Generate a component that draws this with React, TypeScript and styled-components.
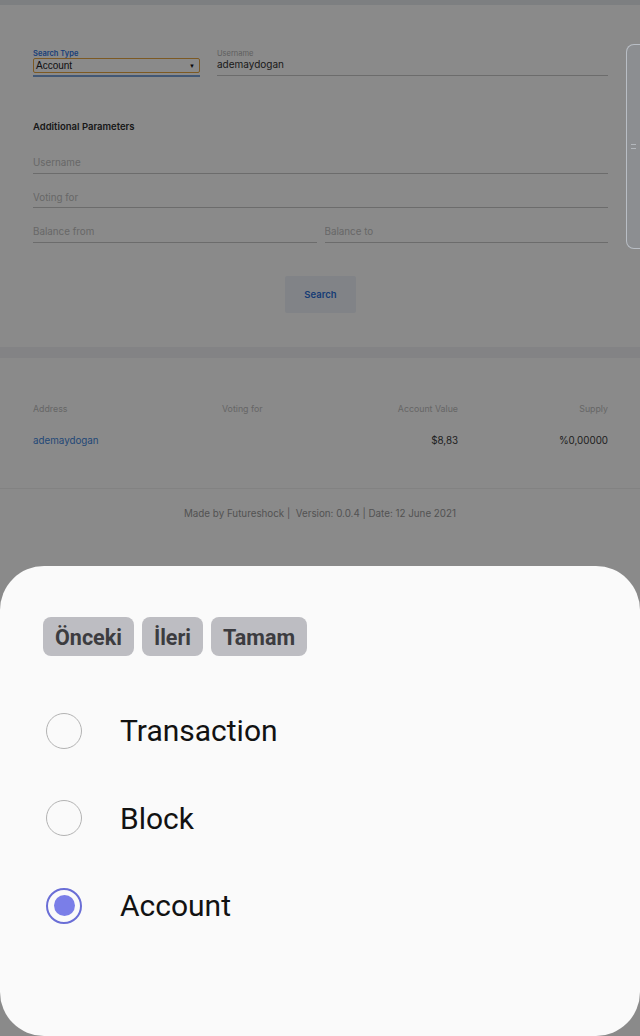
import React from 'react'
import styled, { createGlobalStyle } from 'styled-components'

const GlobalStyle = createGlobalStyle`
  html, body {
    margin: 0;
    padding: 0;
    background: #ffffff;
    font-family: Inter, "Noto Sans", "Liberation Sans", sans-serif;
  }
  * { box-sizing: border-box; }
`;

const Page = styled.div`
  width: 640px;
  min-height: 1036px;
  background: #ffffff;
`;

const TopBar = styled.div`
  height: 5px;
  background: #e8eaee;
`;

const SearchCard = styled.section`
  padding: 44px 32px 34px 33px;
  display: flex;
  flex-direction: column;
`;

const TopRow = styled.div`
  display: grid;
  grid-template-columns: 167px 1fr;
  gap: 17px;
`;

const FieldLabel = styled.div<{ $active?: boolean }>`
  font-size: 7.5px;
  line-height: 9px;
  height: 9px;
  color: ${p => (p.$active ? '#2f74e0' : '#b0b0b0')};
  font-weight: ${p => (p.$active ? 600 : 400)};
`;

const SelectBox = styled.div`
  height: 15px;
  border: 1px solid #e6a441;
  border-radius: 2px;
  display: flex;
  align-items: center;
  justify-content: space-between;
  padding: 0 4px 0 2px;
  font-family: "Liberation Sans", Arial, sans-serif;
  font-size: 10px;
  color: #222;
`;

const Caret = styled.span`
  font-size: 6px;
  color: #111;
`;

const ActiveLine = styled.div`
  margin-top: 2px;
  height: 1.5px;
  background: #7aa2d6;
`;

const ValueText = styled.div`
  font-size: 10px;
  line-height: 12px;
  color: #333;
  padding-bottom: 5px;
  border-bottom: 1px solid #c8c8c8;
`;

const Heading = styled.h3`
  margin: 43px 0 0;
  font-size: 9.5px;
  line-height: 14px;
  font-weight: 600;
  color: #2e2e2e;
`;

const Fields = styled.div`
  margin-top: 21px;
  display: flex;
  flex-direction: column;
  gap: 15.5px;
`;

const FieldRow = styled.div`
  display: grid;
  grid-template-columns: 1fr 1fr;
  gap: 8px;
`;

const LineInput = styled.input`
  display: block;
  width: 100%;
  height: 19px;
  padding: 0 0 2px;
  border: none;
  border-bottom: 1px solid #c8c8c8;
  background: transparent;
  font-family: inherit;
  font-size: 9.8px;
  line-height: 14px;
  color: #333;
  outline: none;
  &::placeholder { color: #c0c0c0; }
`;

const SearchButton = styled.button`
  align-self: center;
  margin-top: 33px;
  width: 71px;
  height: 37px;
  border: none;
  border-radius: 2px;
  background: #eef3fa;
  color: #2c6fd8;
  font-family: inherit;
  font-size: 9.5px;
  font-weight: 600;
`;

const Band = styled.div`
  height: 11px;
  background: #f2f3f5;
`;

const ResultsCard = styled.section`
  padding: 45px 32px 41px 33px;
  border-bottom: 1px solid #f0f0f0;
  display: flex;
  flex-direction: column;
  gap: 20px;
`;

const TableRow = styled.div`
  display: grid;
  grid-template-columns: 189px 118px 118px 1fr;
  line-height: 12px;
`;

const Cell = styled.div<{ $right?: boolean; $head?: boolean; $link?: boolean }>`
  text-align: ${p => (p.$right ? 'right' : 'left')};
  color: ${p => (p.$head ? '#bdbdbd' : p.$link ? '#3f86dc' : '#3a3a3a')};
  font-size: ${p => (p.$head ? '8.8px' : '9.8px')};
`;

const Footer = styled.footer`
  padding-top: 19px;
  text-align: center;
  font-size: 9.8px;
  line-height: 12px;
  color: #999999;
`;

const Scrim = styled.div`
  position: fixed;
  inset: 0;
  background: rgba(0, 0, 0, 0.46);
  z-index: 1;
`;

const EdgeHandle = styled.div`
  position: fixed;
  top: 44px;
  left: 626px;
  width: 30px;
  height: 205px;
  border: 1.5px solid rgba(215, 222, 232, 0.6);
  border-radius: 8px;
  background: rgba(150, 165, 185, 0.14);
  z-index: 3;
  display: flex;
  align-items: center;
  padding-left: 4px;
`;

const Grip = styled.div`
  width: 5px;
  height: 5px;
  border-top: 1px solid rgba(220, 225, 232, 0.5);
  border-bottom: 1px solid rgba(220, 225, 232, 0.5);
`;

const Sheet = styled.div`
  position: fixed;
  left: 0;
  right: 0;
  top: 566px;
  bottom: 0;
  background: #fafafa;
  border-radius: 44px;
  z-index: 2;
  padding: 51px 43px 0;
  font-family: Roboto, "Noto Sans", sans-serif;
`;

const Toolbar = styled.div`
  display: flex;
  gap: 8px;
`;

const ToolButton = styled.button`
  height: 39px;
  padding: 1px 12px 0;
  border: none;
  border-radius: 8px;
  background: #bdbdc2;
  color: #3c3c40;
  font-family: Roboto, sans-serif;
  font-size: 21.5px;
  font-weight: 700;
`;

const OptionList = styled.div`
  margin-top: 31px;
  padding-left: 3px;
  display: flex;
  flex-direction: column;
`;

const Option = styled.label`
  height: 87.5px;
  display: flex;
  align-items: center;
  gap: 38px;
  font-size: 30px;
  color: #121212;
`;

const RadioCircle = styled.span<{ $checked?: boolean }>`
  width: 36px;
  height: 36px;
  border-radius: 50%;
  border: ${p => (p.$checked ? '2px solid #6a6ed6' : '1.5px solid #b3b3b3')};
  display: flex;
  align-items: center;
  justify-content: center;
  &::after {
    content: '';
    display: ${p => (p.$checked ? 'block' : 'none')};
    width: 21px;
    height: 21px;
    border-radius: 50%;
    background: #7a7ee8;
  }
`;

const options = ['Transaction', 'Block', 'Account'];

const App = () => {
  const selected = 'Account';
  return (
    <>
      <GlobalStyle />
      <Page>
        <TopBar />
        <SearchCard>
          <TopRow>
            <div>
              <FieldLabel $active>Search Type</FieldLabel>
              <SelectBox>
                <span>Account</span>
                <Caret>▼</Caret>
              </SelectBox>
              <ActiveLine />
            </div>
            <div>
              <FieldLabel>Username</FieldLabel>
              <ValueText>ademaydogan</ValueText>
            </div>
          </TopRow>
          <Heading>Additional Parameters</Heading>
          <Fields>
            <LineInput placeholder="Username" />
            <LineInput placeholder="Voting for" />
            <FieldRow>
              <LineInput placeholder="Balance from" />
              <LineInput placeholder="Balance to" />
            </FieldRow>
          </Fields>
          <SearchButton type="button">Search</SearchButton>
        </SearchCard>
        <Band />
        <ResultsCard>
          <TableRow>
            <Cell $head>Address</Cell>
            <Cell $head>Voting for</Cell>
            <Cell $head $right>Account Value</Cell>
            <Cell $head $right>Supply</Cell>
          </TableRow>
          <TableRow>
            <Cell $link>ademaydogan</Cell>
            <Cell></Cell>
            <Cell $right>$8,83</Cell>
            <Cell $right>%0,00000</Cell>
          </TableRow>
        </ResultsCard>
        <Footer>Made by Futureshock |&nbsp; Version: 0.0.4 | Date: 12 June 2021</Footer>
      </Page>
      <Scrim />
      <EdgeHandle>
        <Grip />
      </EdgeHandle>
      <Sheet>
        <Toolbar>
          <ToolButton type="button">Önceki</ToolButton>
          <ToolButton type="button">İleri</ToolButton>
          <ToolButton type="button">Tamam</ToolButton>
        </Toolbar>
        <OptionList>
          {options.map(o => (
            <Option key={o}>
              <RadioCircle $checked={o === selected} />
              {o}
            </Option>
          ))}
        </OptionList>
      </Sheet>
    </>
  );
};

export default App;
